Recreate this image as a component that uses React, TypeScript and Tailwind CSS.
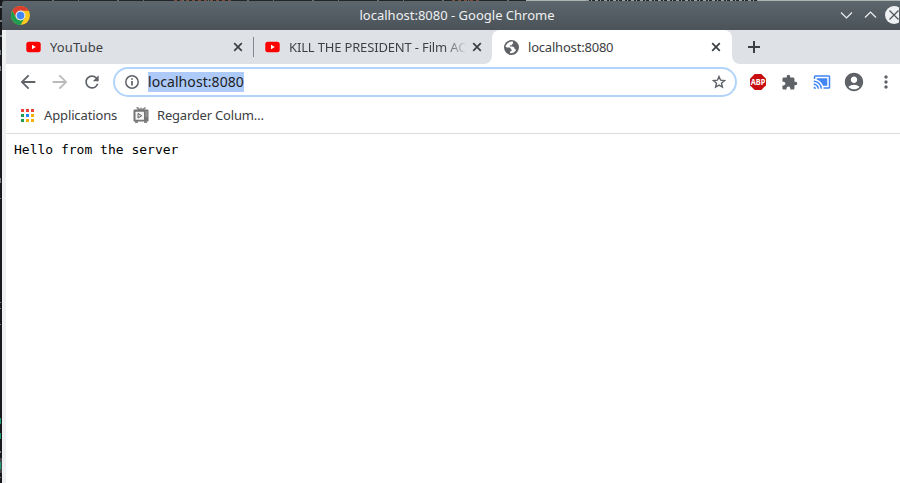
import { MdArrowBack, MdArrowForward, MdRefresh, MdExtension, MdAccountCircle, MdMoreVert } from "react-icons/md";

const sans = "font-['Noto_Sans','Liberation_Sans',sans-serif]";

function ChromeLogo() {
  return (
    <svg width="19" height="19" viewBox="0 0 48 48" className="shrink-0">
      <circle cx="24" cy="24" r="24" fill="#fbc91f" />
      <path d="M3.2 12A24 24 0 0 1 44.8 12L24 12A12 12 0 0 0 13.6 30Z" fill="#dd3e2f" />
      <path d="M3.2 12A24 24 0 0 0 24 48L34.4 30A12 12 0 0 1 13.6 30Z" fill="#1e9c4f" />
      <circle cx="24" cy="24" r="12.5" fill="#dfe6ee" />
      <circle cx="24" cy="24" r="9.5" fill="#4285f4" />
    </svg>
  );
}

function YouTube() {
  return (
    <svg width="15" height="12" viewBox="0 0 15 12" className="shrink-0">
      <rect x="0.3" y="0.7" width="14.4" height="10.6" rx="2.5" fill="#f00" />
      <path d="M6 3.8L9.8 6L6 8.2Z" fill="#fff" />
    </svg>
  );
}

function Globe() {
  return (
    <svg width="15" height="15" viewBox="0 0 14 14" className="shrink-0">
      <circle cx="7" cy="7" r="7" fill="#5f6368" />
      <path d="M8.3 1.4C5.5 1.3 3 2.6 1.7 5.2L1.5 6.2C2.4 7 3.6 7 4.6 7C5.8 7 6.2 7.5 6.3 8.3C7.1 8.7 7.5 9.3 6.9 10.2L5.6 10.9V12.4C8 12.8 10 11.5 11 9.9C11.4 9 11 8.5 10 8.3C9.6 6.7 8.8 6 7.3 6H5.5V4.9H7.2C7.4 3.7 8.7 3.9 8.5 2.9Z" fill="#fff" />
    </svg>
  );
}

function Info() {
  return (
    <svg width="14" height="14" viewBox="0 0 14 14" className="shrink-0" fill="none" stroke="#5f6368" strokeWidth="1.5">
      <circle cx="7" cy="7" r="6.2" />
      <path d="M7 3.2V4.8M7 6V10.5" strokeWidth="1.7" />
    </svg>
  );
}

function Star() {
  return (
    <svg width="14" height="14" viewBox="0 0 14 14" className="shrink-0" fill="none" stroke="#5f6368" strokeWidth="1.4">
      <path d="M7 1.6L8.6 5.2L12.5 5.6L9.5 8.2L10.4 12.1L7 10.1L3.6 12.1L4.5 8.2L1.5 5.6L5.4 5.2Z" />
    </svg>
  );
}

function Cross() {
  return (
    <svg width="10" height="10" viewBox="0 0 10 10" className="shrink-0" stroke="#3c4043" strokeWidth="1.7">
      <path d="M1.2 1.2L8.8 8.8M8.8 1.2L1.2 8.8" />
    </svg>
  );
}

function AppsGrid() {
  const colors = ["#ea4335", "#ea4335", "#ea4335", "#1e9c4f", "#2288f5", "#fbb003", "#1e9c4f", "#fbb003", "#fbb003"];
  return (
    <div className="grid grid-cols-3 gap-[2px]">
      {colors.map((c, i) => (
        <span key={i} className="size-[3px]" style={{ background: c }} />
      ))}
    </div>
  );
}

function Television() {
  return (
    <svg width="16" height="16" viewBox="0 0 16 16" className="shrink-0">
      <path d="M3 0.5L5 0L7 2L8 0L9 2L12 0L13 1L11 3H5Z" fill="#888" />
      <rect x="0.5" y="2.6" width="15" height="12" rx="1.2" fill="#757575" />
      <rect x="2.5" y="4.7" width="8.5" height="8" rx="0.5" fill="#f5f5f5" />
      <path d="M5 6.4L8.8 8.7L5 11Z" fill="#ddd" stroke="#666" />
      <path d="M12.3 5H14.5M12.3 7H14.5M12.3 9H14.5" stroke="#bbb" strokeWidth="0.8" />
      <path d="M2 14H5V16H2ZM11 14H14V16H11Z" fill="#888" />
    </svg>
  );
}

export default function App() {
  return (
    <div className={`flex h-[483px] w-[900px] overflow-hidden bg-[#1c1f23] text-[13px] text-[#3c4043] ${sans}`}>
      <div className="w-[2px] shrink-0 bg-[#17191c]">
        <svg width="2" height="483">
          <path d="M0 6h2v2H0zM0 20h2v2H0zM0 35h2v2H0zM0 50h1v5H0zM0 66h1v5H0zM0 178h1v5H0zM0 198h1v1H0zM0 302h1v1H0zM0 308h1v1H0zM0 324h1v1H0zM0 451h1v2H0zM0 477h1v1H0z" fill="#777b80" />
          <path d="M0 458h2v15H0z" fill="#45484b" />
          <path d="M0 418h1v6H0zM0 433h1v6H0zM0 462h1v7H0z" fill="#199b70" />
        </svg>
      </div>
      <div className="flex w-[898px] flex-col">
        <div className="h-px shrink-0 bg-[#232629]">
          <svg width="898" height="1">
            <path d="M524 0H584M756 0H898" stroke="#aeb4b4" strokeWidth="2" />
            <path d="M584 0H756" stroke="#9a9e9e" strokeWidth="2" strokeDasharray="3 2 1 3" />
            <path d="M50 0H520" stroke="#6d7072" strokeWidth="2" strokeDasharray="2 24 1 38" />
            <path d="M172 0H230M450 0H480" stroke="#804f3c" strokeWidth="2" strokeDasharray="3 3" />
          </svg>
        </div>
        <header className="flex h-[29px] shrink-0 items-center rounded-tl-[3px] bg-linear-to-b from-[#5c666d] to-[#4b5359] pl-[9px] text-[#eff0f1]">
          <ChromeLogo />
          <span className="ml-[329.5px] w-[200px] whitespace-nowrap">localhost:8080 - Google Chrome</span>
          <svg width="61" height="18" viewBox="0 0 61 18" className="ml-[278px] mb-px shrink-0" fill="none" stroke="#eff0f1" strokeWidth="1.2">
            <path d="M3 6.5L8.5 12L14 6.5M27 11.5L32.5 6L38 11.5" />
            <circle cx="56" cy="9" r="9" fill="#eff0f1" stroke="none" />
            <path d="M51.5 4.5L60.5 13.5M60.5 4.5L51.5 13.5" stroke="#4b5359" />
          </svg>
        </header>
        <div className="flex h-[453px] bg-[#eff0f1] pl-1">
          <main className="flex w-[894px] flex-col bg-white">
            <nav className="flex h-[34px] shrink-0">
              <div className="flex w-[486px] items-center rounded-br-[8px] bg-[#dee1e6]">
                <div className="flex w-[247px] items-center pl-[20px]">
                  <YouTube />
                  <span className="ml-[9px] w-[183px] pt-px tracking-[0.1px]">YouTube</span>
                  <Cross />
                </div>
                <div className="h-5 w-px bg-[#80868b]" />
                <div className="flex items-center pl-[11px]">
                  <YouTube />
                  <span className="ml-[9px] w-[176px] whitespace-nowrap bg-linear-to-r from-[#3c4043] from-[155px] to-[#dee1e6] to-[178px] bg-clip-text pt-px tracking-[-0.16px] text-transparent">KILL THE PRESIDENT - Film AC</span>
                  <span className="ml-[7px]"><Cross /></span>
                </div>
              </div>
              <div className="flex w-[240px] bg-[#dee1e6]">
                <div className="flex w-full items-center rounded-t-[8px] bg-white pl-[12px]">
                  <Globe />
                  <span className="ml-[9px] w-[183px] pt-px tracking-[-0.2px]">localhost:8080</span>
                  <Cross />
                </div>
              </div>
              <div className="flex w-[168px] items-center rounded-bl-[8px] bg-[#dee1e6] pl-[16px]">
                <svg width="12" height="12" viewBox="0 0 12 12" stroke="#3c4043" strokeWidth="2"><path d="M6 0V12M0 6H12" /></svg>
              </div>
            </nav>
            <div className="flex h-[36px] shrink-0 items-center text-[#5f6368]">
              <MdArrowBack size={22} className="ml-[11px] shrink-0" />
              <MdArrowForward size={22} className="ml-[10px] shrink-0 text-[#bababa]" />
              <MdRefresh size={20} className="ml-[11px] shrink-0" />
              <div className="ml-[11px] flex h-[30px] w-[624px] shrink-0 items-center rounded-full border-2 border-[#b3d4fa] pr-[9px] pl-[10px]">
                <Info />
                <span className="mr-auto ml-[9px] h-5 bg-[#adcaf9] text-[14px] leading-5 tracking-[0.07px] text-[#202124]">localhost:8080</span>
                <Star />
              </div>
              <svg width="16" height="16" viewBox="0 0 16 16" className="ml-[13px] shrink-0">
                <path d="M4.7 0H11.3L16 4.7V11.3L11.3 16H4.7L0 11.3V4.7Z" fill="#c70d10" />
                <text x="8" y="11" textAnchor="middle" fontSize="8" fontWeight="700" textLength="14.5" lengthAdjust="spacingAndGlyphs" fill="#fff">ABP</text>
              </svg>
              <MdExtension size={17} className="ml-[15px] shrink-0" />
              <svg width="18" height="18" viewBox="0 0 24 24" className="ml-[15px] shrink-0" fill="#4285f4">
                <path d="M1 18v3h3c0-1.66-1.34-3-3-3zm0-4v2c2.76 0 5 2.24 5 5h2c0-3.87-3.13-7-7-7zm18-7H5v1.63c3.96 1.28 7.09 4.41 8.37 8.37H19V7zM1 10v2c4.97 0 9 4.03 9 9h2c0-6.08-4.93-11-11-11zm20-7H3c-1.1 0-2 .9-2 2v3h2V5h18v14h-7v2h7c1.1 0 2-.9 2-2V5c0-1.1-.9-2-2-2z" />
              </svg>
              <MdAccountCircle size={22} className="ml-[12px] shrink-0" />
              <MdMoreVert size={20} className="ml-[11px] shrink-0" />
            </div>
            <div className="flex h-[34px] shrink-0 items-center border-b border-[#dadce0] pb-[3px] pl-[15px]">
              <AppsGrid />
              <span className="ml-[10px] w-[74px] pt-[2px] tracking-[-0.13px]">Applications</span>
              <span className="ml-[15px]"><Television /></span>
              <span className="ml-[8px] pt-[2px] tracking-[-0.2px]">Regarder Colum…</span>
            </div>
            <pre className="pt-[8px] pl-[8px] font-['DejaVu_Sans_Mono',monospace] text-[13px] leading-[15px] text-black">Hello from the server</pre>
          </main>
        </div>
      </div>
    </div>
  );
}
